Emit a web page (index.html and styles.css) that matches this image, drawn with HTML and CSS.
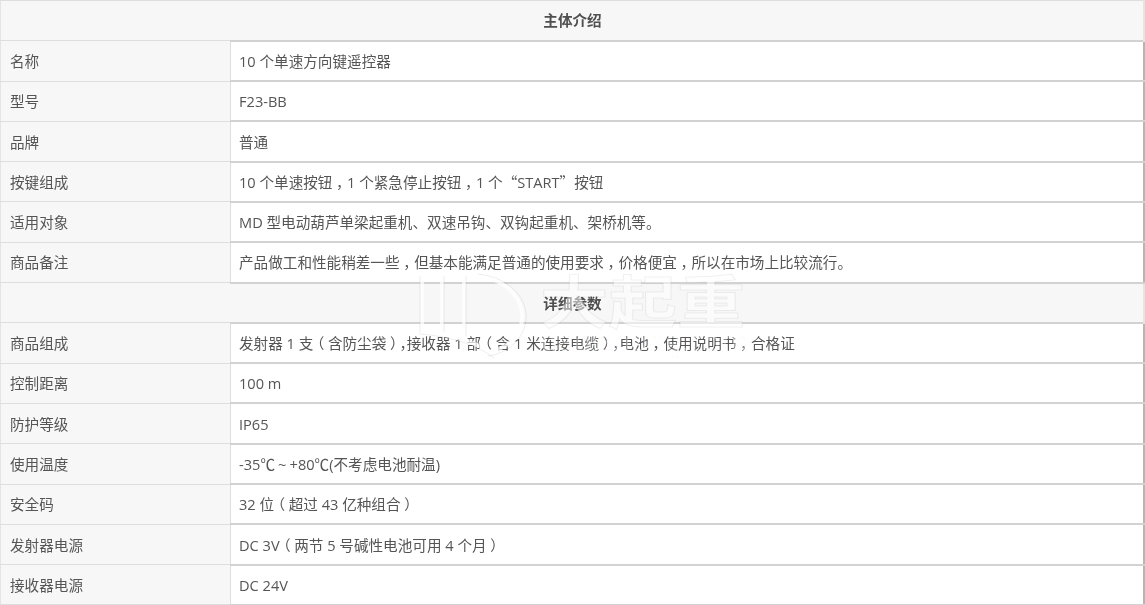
FILE: index.html
```html
<!DOCTYPE html>
<html lang="zh-Hans">
<head>
<meta charset="utf-8">
<title>主体介绍</title>
<link rel="stylesheet" href="styles.css">
</head>
<body>
<main class="sheet">
<table class="spec">
<colgroup><col class="col-label"><col></colgroup>
<tbody>
<tr><th class="head" colspan="2">主体介绍</th></tr>
<tr><th>名称</th><td>10 个单速方向键遥控器</td></tr>
<tr><th>型号</th><td>F23-BB</td></tr>
<tr><th>品牌</th><td>普通</td></tr>
<tr><th>按键组成</th><td>10 个单速按钮<span class="fw">，</span>1 个紧急停止按钮<span class="fw">，</span>1 个<span class="cjk">“</span>START<span class="cjk">”</span>按钮</td></tr>
<tr><th>适用对象</th><td>MD 型电动葫芦单梁起重机、双速吊钩、双钩起重机、架桥机等。</td></tr>
<tr><th>商品备注</th><td>产品做工和性能稍差一些<span class="fw">，</span>但基本能满足普通的使用要求<span class="fw">，</span>价格便宜<span class="fw">，</span>所以在市场上比较流行。</td></tr>
<tr><th class="head" colspan="2">详细参数</th></tr>
<tr><th>商品组成</th><td>发射器 1 支<span class="fw">（</span>含防尘袋<span class="fw">）</span><span class="fw fw-tight">，</span>接收器 1 部<span class="fw">（</span>含 1 米连接电缆<span class="fw">）</span><span class="fw fw-tight">，</span>电池<span class="fw">，</span>使用说明书<span class="fw">，</span>合格证</td></tr>
<tr><th>控制距离</th><td>100 m</td></tr>
<tr><th>防护等级</th><td>IP65</td></tr>
<tr><th>使用温度</th><td>-35℃<span class="wave">~</span>+80℃(不考虑电池耐温)</td></tr>
<tr><th>安全码</th><td>32 位<span class="fw">（</span>超过 43 亿种组合<span class="fw">）</span></td></tr>
<tr><th>发射器电源</th><td>DC 3V<span class="fw">（</span>两节 5 号碱性电池可用 4 个月<span class="fw">）</span></td></tr>
<tr><th>接收器电源</th><td>DC 24V</td></tr>
</tbody>
</table>
<div class="mark" aria-hidden="true">
<svg class="mark-logo" width="112" height="80" viewBox="0 0 112 80">
  <g fill="none" stroke-linecap="round">
    <path class="mark-band" d="M4 0V56M24 0V56M46 0V60M60 0C92 4 106 26 104 44C102 62 86 74 70 76M4 56C30 58 60 66 78 80"/>
    <path class="mark-edge" d="M2 0V56M26 0V56M48 0V60M60 -2C96 2 110 26 108 44C106 64 88 78 70 80M2 58C30 60 58 68 76 82"/>
  </g>
</svg>
<div class="mark-text"><span class="mark-name">大起重</span><span class="mark-url">daqizhong.com</span></div>
</div>
</main>
</body>
</html>
```
FILE: styles.css
```css
html, body { margin: 0; padding: 0; background: #fff; }
.sheet { position: relative; width: 1145px; height: 605px; overflow: hidden; }
.spec {
  width: 1145px;
  height: 605px;
  border-collapse: collapse;
  table-layout: fixed;
  font: 14.6px/20px "Open Sans", "Noto Sans CJK SC", sans-serif;
  color: #555;
  filter: blur(0.3px);
}
.col-label { width: 230px; }
.spec th, .spec td { border: 1px solid #dedede; padding: 0 8px; text-align: left; font-weight: 400; }
.spec tr { height: 40.3px; }
.spec th { background: #f7f7f7; border-left-color: #e4e4e4; padding-left: 9px; }
.spec td { background: #fff; border-left: 1px solid #bdbdbd; border-right: 2px solid #b5b5b5; border-top: 2px solid #d2d2d2; border-bottom: 2px solid #d2d2d2; }
.spec .head { text-align: center; font-weight: 700; color: #505050; border-right: 2px solid #e4e4e4; }
.fw {
  display: inline-block;
  width: 1em;
  text-align: center;
  font-family: "Noto Sans CJK SC", sans-serif;
  font-feature-settings: "halt";
}
.fw-tight { width: .5em; margin-left: -.1em; text-align: left; }
.cjk { font-family: "Noto Sans CJK SC", sans-serif; font-feature-settings: "fwid"; }
.wave { display: inline-block; width: 1em; text-align: center; }
.mark {
  position: absolute;
  left: 418px;
  top: 270px;
  display: flex;
  gap: 10px;
  pointer-events: none;
}
.mark-logo { overflow: visible; margin-top: 6px; }
.mark-band { stroke: rgba(255,255,255,.7); stroke-width: 4; }
.mark-edge { stroke: rgba(0,0,0,.07); stroke-width: 1; }
.mark-text { display: flex; flex-direction: column; }
.mark-name {
  font: 700 57px/57px "Noto Sans CJK SC", sans-serif;
  color: rgba(255,255,255,.5);
  -webkit-text-stroke: 1px rgba(0,0,0,.06);
  transform: scaleX(1.2);
  transform-origin: left center;
}
.mark-url {
  font: 400 28px/26px "Open Sans", sans-serif;
  letter-spacing: 0.6px;
  color: rgba(255,255,255,.35);
  -webkit-text-stroke: 0.5px rgba(0,0,0,.06);
}
```
